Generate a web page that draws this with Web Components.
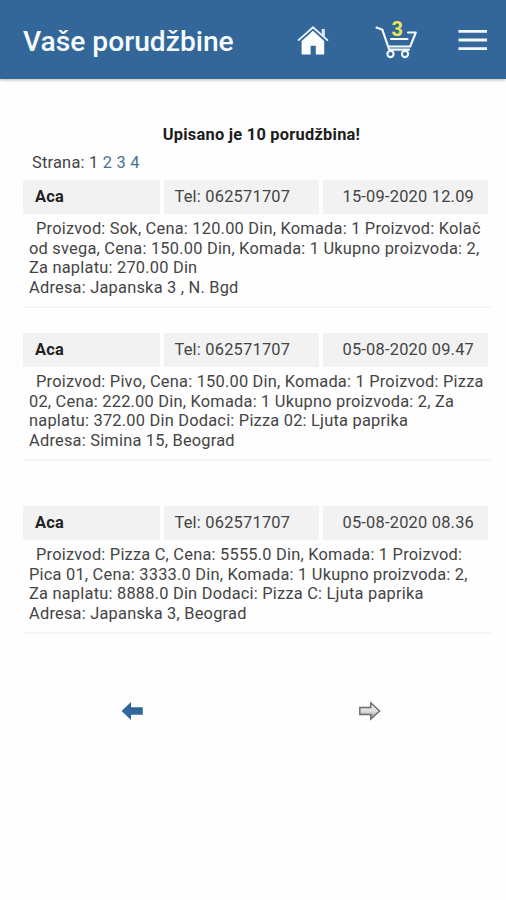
<!DOCTYPE html>
<html lang="sr">
<head>
<meta charset="utf-8">
<title>Vaše porudžbine</title>
<style>
body { margin: 0; background: #fefefe; font-family: Roboto, sans-serif; }
</style>
</head>
<body>
<orders-page></orders-page>

<template id="app-header">
  <style>
    :host { display: flex; box-sizing: border-box; height: 79px; background: #336699; color: #f6fbff; align-items: flex-start; box-shadow: 0 1px 3px rgba(0,0,0,.28); }
    h1 { margin: 25px 0 0 23px; font-size: 28.2px; line-height: 33px; font-weight: 500; width: 272px; white-space: nowrap; }
    svg { display: block; flex: none; }
    .home { margin-top: 24px; }
    .cart { position: relative; margin: 24px 0 0 43.5px; width: 44px; height: 36px; }
    .badge { position: absolute; left: 17px; top: -5px; font-size: 20px; line-height: 20px; font-weight: 700; color: #e9e95a; }
    .menu { margin: 28px 0 0 39.5px; }
  </style>
  <h1><slot></slot></h1>
  <svg class="home" width="36" height="32" viewBox="0 0 36 32">
    <path d="M26.8 5h3v8.2l-3-2.8z" fill="#dcebf8"/>
    <path d="M3 16.6 18 3.2 33 16.6" fill="none" stroke="#e6f2fb" stroke-width="1.9"/>
    <path d="M18 6.8 29.2 17V30.5H20.8V21.8H15.6V30.5H6.6V17z" fill="#fbfeff"/>
  </svg>
  <div class="cart">
    <svg width="44" height="36" viewBox="0 0 44 36" fill="none" stroke="#f2f9ff" stroke-width="2.1" stroke-linecap="round" stroke-linejoin="round">
      <path d="M1.5 3.5 7.3 5.7 14.2 25.6H34"/>
      <path d="M33 8.5h7.8L35.2 22.5H13.5"/>
      <path d="M16 15h16.5"/>
      <circle cx="15.5" cy="30" r="3.1"/>
      <circle cx="30" cy="30" r="3.1"/>
    </svg>
    <span class="badge">3</span>
  </div>
  <svg class="menu" width="30" height="24" viewBox="0 0 30 24" stroke="#f2f9ff" stroke-width="2.8"><path d="M.5 3.3H29M.5 12H29M.5 20.6H29"/></svg>
</template>

<template id="order-card">
  <style>
    :host { display: block; box-sizing: border-box; border-bottom: 2px solid #f6f6f6; width: 468px; height: 128px; }
    .head { display: grid; grid-template-columns: 137px 155px 165px; column-gap: 4px; height: 34px; line-height: 34px; }
    .head > * { background: #f2f2f2; white-space: nowrap; }
    .name { font-weight: 700; color: #222; padding-left: 12px; }
    .tel { padding-left: 10.5px; }
    .date { text-align: right; padding-right: 14px; }
    .body { padding: 5px 0 0 6px; line-height: 19.6px; white-space: pre; letter-spacing: .22px; }
    .body::before { content: ""; display: inline-block; width: 7px; }
  </style>
  <div class="head">
    <div class="name"><slot name="name"></slot></div>
    <div class="tel"><slot name="tel"></slot></div>
    <div class="date"><slot name="date"></slot></div>
  </div>
  <div class="body"><slot></slot></div>
</template>

<template id="page-links">
  <style>
    :host { display: block; }
    a { color: #47758d; text-decoration: none; }
  </style>
  Strana: 1 <a>2</a> <a>3</a> <a>4</a>
</template>

<template id="page-arrows">
  <style>
    :host { display: flex; }
    svg { display: block; }
    .prev { margin-left: 121px; }
    .next { margin-left: 214px; }
  </style>
  <svg class="prev" width="23" height="20" viewBox="0 0 23 20"><path d="M.6 10 10 1V6.3H21.8V13.7H10V19z" fill="#32689d"/><path d="M3 9.8 9 4.2V8H21" fill="none" stroke="#2c5f92" stroke-width="1"/></svg>
  <svg class="next" width="24" height="20" viewBox="0 0 24 20">
    <defs><linearGradient id="g" x1="0" y1="0" x2="0" y2="1"><stop offset="0" stop-color="#f2f2f2"/><stop offset=".55" stop-color="#dcdcdc"/><stop offset="1" stop-color="#777"/></linearGradient></defs>
    <path d="M1.8 6.5H12.8V1.8L21.6 10 12.8 18.2V13.5H1.8z" fill="url(#g)" stroke="#6b6b6b" stroke-width="1.4"/>
  </svg>
</template>

<template id="orders-page">
  <style>
    :host { display: block; height: 900px; overflow: hidden; background: #fefefe; color: #444; font-size: 16.4px; letter-spacing: .22px; }
    app-header { letter-spacing: 0; }
    .summary { margin: 46px 0 0; padding-left: 17px; text-align: center; font-size: 16.4px; line-height: 20px; font-weight: 700; color: #1c1c1c; letter-spacing: .25px; }
    page-links { margin: 8px 0 0 32px; line-height: 20px; }
    main { margin: 7px 0 0 23px; display: grid; row-gap: 25px; }
    .last { margin-top: 20px; }
    page-arrows { margin-top: 67px; }
  </style>
  <app-header>Vaše porudžbine</app-header>
  <p class="summary">Upisano je 10 porudžbina!</p>
  <page-links></page-links>
  <main>
    <order-card><span slot="name">Aca</span><span slot="tel">Tel: 062571707</span><span slot="date">15-09-2020 12.09</span>Proizvod: Sok, Cena: 120.00 Din, Komada: 1 Proizvod: Kolač
od svega, Cena: 150.00 Din, Komada: 1 Ukupno proizvoda: 2,
Za naplatu: 270.00 Din
Adresa: Japanska 3 , N. Bgd</order-card>
    <order-card><span slot="name">Aca</span><span slot="tel">Tel: 062571707</span><span slot="date">05-08-2020 09.47</span>Proizvod: Pivo, Cena: 150.00 Din, Komada: 1 Proizvod: Pizza
02, Cena: 222.00 Din, Komada: 1 Ukupno proizvoda: 2, Za
naplatu: 372.00 Din Dodaci: Pizza 02: Ljuta paprika
Adresa: Simina 15, Beograd</order-card>
    <order-card class="last"><span slot="name">Aca</span><span slot="tel">Tel: 062571707</span><span slot="date">05-08-2020 08.36</span>Proizvod: Pizza C, Cena: 5555.0 Din, Komada: 1 Proizvod:
Pica 01, Cena: 3333.0 Din, Komada: 1 Ukupno proizvoda: 2,
Za naplatu: 8888.0 Din Dodaci: Pizza C: Ljuta paprika
Adresa: Japanska 3, Beograd</order-card>
  </main>
  <page-arrows></page-arrows>
</template>

<script>
for (const name of ['app-header', 'order-card', 'page-links', 'page-arrows', 'orders-page']) {
  customElements.define(name, class extends HTMLElement {
    constructor() {
      super();
      this.attachShadow({ mode: 'open' }).append(document.getElementById(name).content.cloneNode(true));
    }
  });
}
</script>
</body>
</html>
